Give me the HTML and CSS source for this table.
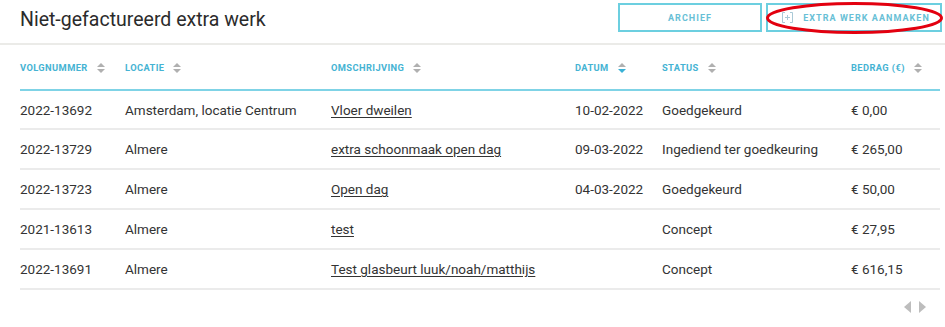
FILE: index.html
```html
<!DOCTYPE html>
<html lang="nl">
<head>
<meta charset="utf-8">
<title>Niet-gefactureerd extra werk</title>
<link rel="stylesheet" href="styles.css">
</head>
<body>
<div class="page">
  <header class="topbar">
    <h1 class="title">Niet-gefactureerd extra werk</h1>
    <div class="actions">
      <button class="btn btn-archief">ARCHIEF</button>
      <button class="btn btn-add">
        <svg class="plus" width="11" height="11" viewBox="0 0 11 11"><path d="M3 0.5H0.5V10.5H3M8 0.5H10.5V10.5H8M5.5 3V8M3 5.5H8" fill="none" stroke="#a9c9d6" stroke-width="1"/></svg>
        <span>EXTRA WERK AANMAKEN</span>
        <svg class="annot" width="179" height="34" viewBox="0 0 179 34"><ellipse cx="89.5" cy="17" rx="87" ry="14.5" fill="none" stroke="#e3000f" stroke-width="3"/></svg>
      </button>
    </div>
  </header>
  <table class="grid">
    <colgroup>
      <col class="c1"><col class="c2"><col class="c3"><col class="c4"><col class="c5"><col class="c6">
    </colgroup>
    <thead>
      <tr>
        <th><span class="th">VOLGNUMMER<i class="sort"></i></span></th>
        <th><span class="th">LOCATIE<i class="sort"></i></span></th>
        <th><span class="th">OMSCHRIJVING<i class="sort"></i></span></th>
        <th><span class="th">DATUM<i class="sort active"></i></span></th>
        <th><span class="th">STATUS<i class="sort"></i></span></th>
        <th><span class="th">BEDRAG (€)<i class="sort"></i></span></th>
      </tr>
    </thead>
    <tbody>
      <tr><td>2022-13692</td><td>Amsterdam, locatie Centrum</td><td><a href="#">Vloer dweilen</a></td><td>10-02-2022</td><td>Goedgekeurd</td><td>€ 0,00</td></tr>
      <tr><td>2022-13729</td><td>Almere</td><td><a href="#">extra schoonmaak open dag</a></td><td>09-03-2022</td><td>Ingediend ter goedkeuring</td><td>€ 265,00</td></tr>
      <tr><td>2022-13723</td><td>Almere</td><td><a href="#">Open dag</a></td><td>04-03-2022</td><td>Goedgekeurd</td><td>€ 50,00</td></tr>
      <tr><td>2021-13613</td><td>Almere</td><td><a href="#">test</a></td><td></td><td>Concept</td><td>€ 27,95</td></tr>
      <tr><td>2022-13691</td><td>Almere</td><td><a href="#">Test glasbeurt luuk/noah/matthijs</a></td><td></td><td>Concept</td><td>€ 616,15</td></tr>
    </tbody>
  </table>
  <div class="pager">
    <span class="arrow left"></span>
    <span class="arrow right"></span>
  </div>
</div>
</body>
</html>
```

FILE: styles.css
```css
* { box-sizing: border-box; }
html, body { margin: 0; padding: 0; background: #fff; }
body { font-family: Roboto, "Noto Sans", Arial, sans-serif; color: #333; }
.page { width: 945px; height: 327px; overflow: hidden; }

.topbar {
  display: flex;
  justify-content: space-between;
  align-items: flex-start;
  height: 45px;
  padding: 3px 3px 0 20px;
  border-bottom: 2px solid #ebebe8;
}
.title {
  margin: 5px 0 0;
  font-size: 19.5px;
  font-weight: 400;
  color: #2b2b2b;
}
.actions { display: flex; gap: 4px; }
.btn {
  position: relative;
  height: 29px;
  background: #fff;
  border: 2px solid #6ccfe0;
  color: #68bfd6;
  font-family: Roboto, Arial, sans-serif;
  font-size: 9px;
  font-weight: 700;
  letter-spacing: 1.05px;
  display: flex;
  align-items: center;
  justify-content: center;
  padding: 0;
  cursor: pointer;
}
.btn-archief { width: 144px; }
.btn-add { width: 176px; gap: 10px; padding-left: 4px; }
.plus { display: block; }
.annot { position: absolute; left: -3px; top: -4px; pointer-events: none; }

.grid {
  margin: 0 0 0 20px;
  width: 920px;
  border-collapse: collapse;
  table-layout: fixed;
}
.c1 { width: 105px; } .c2 { width: 206px; } .c3 { width: 244px; }
.c4 { width: 87px; } .c5 { width: 189px; } .c6 { width: 89px; }
.grid thead tr { height: 45px; border-bottom: 2px solid #7fd3e6; }
.grid th { text-align: left; padding: 0 0 3px; vertical-align: middle; }
.th {
  display: inline-flex;
  align-items: center;
  font-size: 9.3px;
  font-weight: 700;
  letter-spacing: 0.4px;
  color: #45b3d3;
}
.sort {
  display: inline-block;
  position: relative;
  width: 8px;
  height: 10px;
  margin-left: 9px;
}
.sort::before, .sort::after {
  content: "";
  position: absolute;
  left: 0;
  border-left: 4px solid transparent;
  border-right: 4px solid transparent;
}
.sort::before { top: 0; border-bottom: 4px solid #b0b0b0; }
.sort::after { bottom: 0; border-top: 4px solid #b0b0b0; }
.sort.active::after { border-top-color: #39b1d6; }

.grid tbody tr { height: 40px; border-bottom: 2px solid #ebebeb; }
.grid tbody tr:first-child { height: 39px; }
.grid td {
  padding: 0;
  font-size: 13.5px;
  color: #333;
  vertical-align: middle;
  white-space: nowrap;
}
.grid a { color: #333; text-decoration: underline; text-underline-offset: 2px; }

.pager {
  display: flex;
  justify-content: flex-end;
  gap: 8px;
  padding: 11px 19px 0 0;
}
.arrow { width: 0; height: 0; border-top: 6px solid transparent; border-bottom: 6px solid transparent; }
.arrow.left { border-right: 7px solid #bdbdbd; }
.arrow.right { border-left: 7px solid #bdbdbd; }
```
